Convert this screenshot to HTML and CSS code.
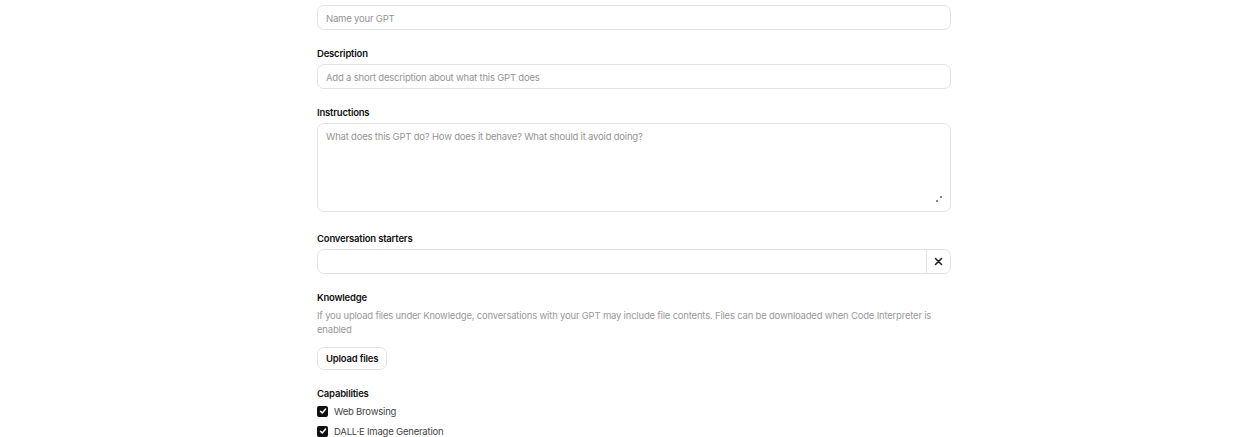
FILE: index.html
```html
<!DOCTYPE html>
<html>
<head>
<meta charset="utf-8">
<link rel="stylesheet" href="styles.css">
</head>
<body>
<div class="form">
  <div class="input first"><span class="ph">Name your GPT</span></div>

  <div class="label">Description</div>
  <div class="input"><span class="ph">Add a short description about what this GPT does</span></div>

  <div class="label">Instructions</div>
  <div class="textarea">
    <span class="ph">What does this GPT do? How does it behave? What should it avoid doing?</span>
    <svg class="expand" width="10" height="10" viewBox="0 0 10 10"><rect x="6" y="1" width="2" height="2" fill="#8a8a8a"/><rect x="2" y="5" width="2" height="2" fill="#8a8a8a"/></svg>
  </div>

  <div class="label gap-lg">Conversation starters</div>
  <div class="starter">
    <div class="starter-field"></div>
    <div class="starter-x">
      <svg width="9" height="9" viewBox="0 0 9 9"><path d="M1.5 1.5 L7.5 7.5 M7.5 1.5 L1.5 7.5" stroke="#222" stroke-width="1.6" stroke-linecap="round"/></svg>
    </div>
  </div>

  <div class="label">Knowledge</div>
  <p class="help">If you upload files under Knowledge, conversations with your GPT may include file contents. Files can be downloaded when Code Interpreter is enabled</p>
  <div class="btn">Upload files</div>

  <div class="label cap">Capabilities</div>
  <div class="check"><span class="box"><svg width="8" height="8" viewBox="0 0 8 8"><path d="M1.5 4.2 L3.3 6 L6.6 2" stroke="#fff" stroke-width="1.5" fill="none" stroke-linecap="round" stroke-linejoin="round"/></svg></span><span>Web Browsing</span></div>
  <div class="check"><span class="box"><svg width="8" height="8" viewBox="0 0 8 8"><path d="M1.5 4.2 L3.3 6 L6.6 2" stroke="#fff" stroke-width="1.5" fill="none" stroke-linecap="round" stroke-linejoin="round"/></svg></span><span>DALL·E Image Generation</span></div>
</div>
</body>
</html>
```

FILE: styles.css
```css
html, body {
  margin: 0;
  padding: 0;
  background: #fff;
}
body {
  font-family: Inter, "Noto Sans", "Liberation Sans", sans-serif;
  font-size: 9.5px;
  letter-spacing: -0.2px;
  color: #0d0d0d;
}
.form {
  width: 634px;
  margin-left: 317px;
  padding-top: 5px;
  display: flex;
  flex-direction: column;
}
.input {
  height: 25px;
  box-sizing: border-box;
  border: 1px solid #e3e3e3;
  border-radius: 7px;
  display: flex;
  align-items: center;
  padding-left: 8px;
  padding-top: 1px;
}
.ph {
  color: #959595;
}
.label {
  font-weight: 600;
  line-height: 14px;
  margin-top: 17px;
  margin-bottom: 3px;
  color: #111;
}
.label.gap-lg {
  margin-top: 20px;
}
.textarea {
  position: relative;
  height: 89px;
  box-sizing: border-box;
  border: 1px solid #e3e3e3;
  border-radius: 7px;
  padding: 7px 8px;
}
.expand {
  position: absolute;
  right: 6px;
  bottom: 6px;
}
.starter {
  height: 25px;
  box-sizing: border-box;
  border: 1px solid #e3e3e3;
  border-radius: 7px;
  display: flex;
}
.starter-field {
  flex: 1;
}
.starter-x {
  width: 23px;
  border-left: 1px solid #e3e3e3;
  display: flex;
  align-items: center;
  justify-content: center;
}
.help {
  margin: 1px 0 0;
  color: #9a9a9a;
  line-height: 14px;
}
.btn {
  align-self: flex-start;
  margin-top: 10px;
  height: 23px;
  box-sizing: border-box;
  border: 1px solid #e3e3e3;
  border-radius: 7px;
  padding: 0 8px;
  display: flex;
  align-items: center;
  font-weight: 600;
  color: #111;
}
.label.cap {
  margin-top: 17px;
  margin-bottom: 0;
}
.check {
  display: flex;
  align-items: center;
  gap: 6px;
  height: 20px;
  color: #444;
}
.box {
  width: 11px;
  height: 11px;
  border-radius: 2px;
  background: #111;
  display: flex;
  align-items: center;
  justify-content: center;
}
```
